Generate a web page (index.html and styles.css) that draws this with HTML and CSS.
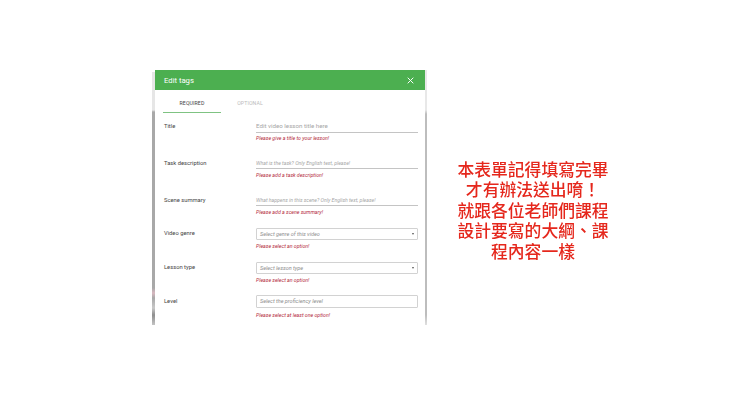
FILE: index.html
```html
<!DOCTYPE html>
<html lang="zh-Hant">
<head>
<meta charset="utf-8">
<title>Edit tags</title>
<link rel="stylesheet" href="styles.css">
</head>
<body>
<main class="stage">
  <div class="strip strip-left"></div>
  <section class="dialog">
    <header class="dialog-head">
      <span class="dialog-title">Edit tags</span>
      <svg class="close" viewBox="0 0 10 10" width="7" height="7"><path d="M1 1L9 9M9 1L1 9" stroke="#fff" stroke-width="1.4" fill="none"/></svg>
    </header>
    <nav class="tabs">
      <span class="tab tab-active">REQUIRED</span>
      <span class="tab">OPTIONAL</span>
    </nav>
    <div class="form">
      <div class="row row-title">
        <span class="label">Title</span>
        <div class="field">
          <div class="line line-lg">Edit video lesson title here</div>
          <p class="err">Please give a title to your lesson!</p>
        </div>
      </div>
      <div class="row row-task">
        <span class="label">Task description</span>
        <div class="field">
          <div class="line line-sm">What is the task? Only English text, please!</div>
          <p class="err">Please add a task description!</p>
        </div>
      </div>
      <div class="row row-scene">
        <span class="label">Scene summary</span>
        <div class="field">
          <div class="line line-sm">What happens in this scene? Only English text, please!</div>
          <p class="err">Please add a scene summary!</p>
        </div>
      </div>
      <div class="row row-genre">
        <span class="label">Video genre</span>
        <div class="field">
          <div class="select">Select genre of this video<i class="caret"></i></div>
          <p class="err">Please select an option!</p>
        </div>
      </div>
      <div class="row row-type">
        <span class="label">Lesson type</span>
        <div class="field">
          <div class="select">Select lesson type<i class="caret"></i></div>
          <p class="err">Please select an option!</p>
        </div>
      </div>
      <div class="row row-level">
        <span class="label">Level</span>
        <div class="field">
          <div class="select select-tall">Select the proficiency level</div>
          <p class="err">Please select at least one option!</p>
        </div>
      </div>
    </div>
  </section>
  <div class="strip strip-right"></div>
  <aside class="note">本表單記得填寫完畢<br>才有辦法送出唷！<br>就跟各位老師們課程<br>設計要寫的大綱、課<br>程內容一樣</aside>
</main>
</body>
</html>
```
FILE: styles.css
```css
html, body { margin: 0; padding: 0; background: #fff; }
body { width: 740px; height: 416px; overflow: hidden; font-family: Roboto, "Liberation Sans", sans-serif; }
.stage { display: flex; align-items: flex-start; padding: 70px 0 0 152px; filter: blur(.35px); }
.strip { height: 255px; flex: none; }
.strip-left { width: 3px; background: linear-gradient(to bottom, #fff 0, #fff 2px, #e6e6e6 2px, #e6e6e6 40px, #a8a8a8 42px, #a8a8a8 218px, #d8b8c0 223px, #a8a8a8 228px, #c8c8c8 238px, #8e8e8e 245px, #c4c4c4 255px); }
.strip-right { width: 2px; background: linear-gradient(to bottom, #e8e8e8 0, #e8e8e8 40px, #bdbdbd 44px, #bdbdbd 245px, #e0e0e0 255px); }
.dialog { width: 270px; height: 255px; flex: none; overflow: hidden; background: #fff; }
.dialog-head { height: 20px; padding: 0 11px 0 9px; background: #4caf50; display: flex; align-items: center; justify-content: space-between; color: #fff; }
.dialog-title { font-size: 7.7px; }
.tabs { display: flex; height: 23px; padding-left: 8px; }
.tab { width: 58px; font-size: 5.2px; line-height: 26px; text-align: center; color: #bbb; box-sizing: border-box; letter-spacing: .1px; }
.tab-active { color: #444; border-bottom: 1px solid #7fc382; }
.form { padding: 9px 7px 0 9px; }
.row { display: flex; align-items: flex-start; height: 37px; }
.row-scene { height: 32px; }
.row-genre { height: 34px; }
.row-type { height: 33px; }
.row-genre .label, .row-type .label { margin-top: 1px; }
.row-level .label { margin-top: 2px; }
.label { width: 92px; flex: none; font-size: 5.8px; line-height: 8px; color: #444; }
.field { flex: 1; min-width: 0; }
.line { border-bottom: 1px solid #c4c4c4; color: #a6a6a6; }
.line-lg { font-size: 6.2px; height: 10px; line-height: 8px; }
.line-sm { font-size: 5.15px; font-style: italic; height: 9px; line-height: 8px; }
.select { position: relative; height: 12px; line-height: 10px; border: 1px solid #d2d2d2; border-radius: 1px; box-sizing: border-box; padding-left: 3px; font-size: 5.5px; font-style: italic; color: #8e8e8e; }
.select-tall { height: 13px; line-height: 11px; }
.caret { position: absolute; right: 3px; top: 4px; border: 1.5px solid transparent; border-top: 2px solid #555; border-bottom: 0; }
.err { margin: 3px 0 0; font-size: 5.2px; line-height: 7px; font-style: italic; color: #b3283c; }
.row-title .err { margin-top: 2px; }
.row-level .err { margin-top: 4px; }
.note { width: 170px; margin-left: 21px; margin-top: 89px; text-align: center; font-size: 16.8px; font-weight: 500; line-height: 20.4px; color: #e5271c; font-family: "Noto Sans CJK TC", "Noto Sans CJK SC", sans-serif; }
```
